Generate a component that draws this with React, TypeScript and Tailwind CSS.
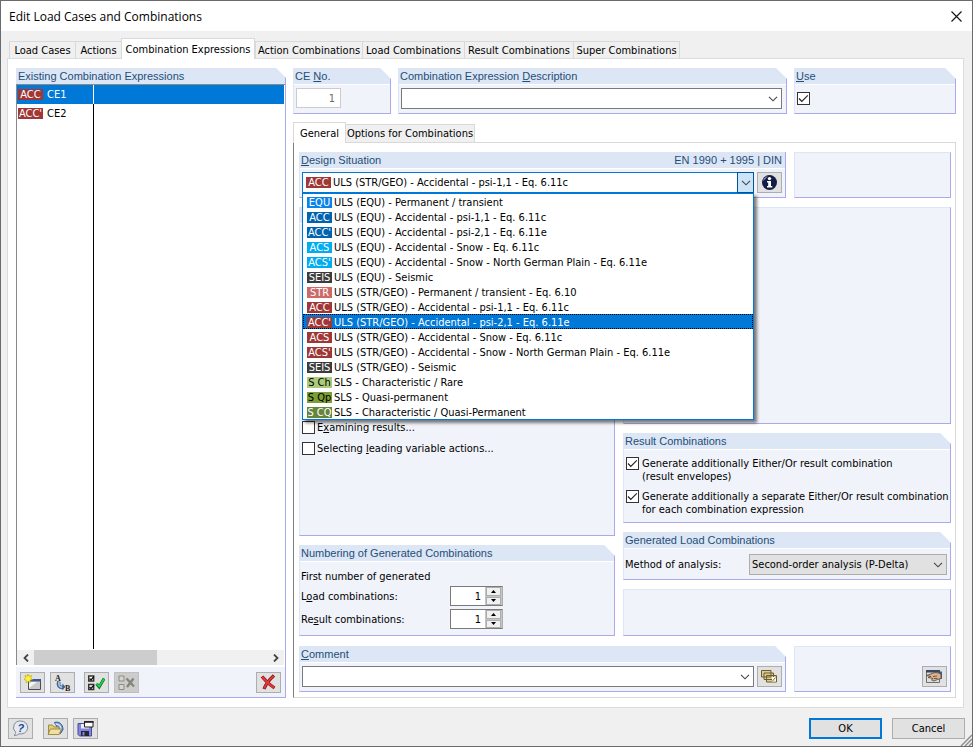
import { useState, type ReactNode } from "react";
import clsx from "clsx";

const TABS = [
  { name: "Load Cases", width: "w-[67px]" },
  { name: "Actions", width: "w-[47px]" },
  { name: "Combination Expressions", width: "w-[134px]" },
  { name: "Action Combinations", width: "w-[108px]" },
  { name: "Load Combinations", width: "w-[103px]" },
  { name: "Result Combinations", width: "w-[110px]" },
  { name: "Super Combinations", width: "w-[107px]" },
];

interface Situation {
  code: string;
  label: string;
  badge: string;
}

const RED = "bg-[#9e3735] text-white";

const SITUATIONS: Situation[] = [
  { code: "EQU", label: "ULS (EQU) - Permanent / transient", badge: "bg-[#0a84ea] text-white" },
  { code: "ACC", label: "ULS (EQU) - Accidental - psi-1,1 - Eq. 6.11c", badge: "bg-[#0063b1] text-white" },
  { code: "ACC'", label: "ULS (EQU) - Accidental - psi-2,1 - Eq. 6.11e", badge: "bg-[#0063b1] text-white" },
  { code: "ACS", label: "ULS (EQU) - Accidental - Snow - Eq. 6.11c", badge: "bg-[#00adf0] text-white" },
  { code: "ACS'", label: "ULS (EQU) - Accidental - Snow - North German Plain - Eq. 6.11e", badge: "bg-[#00adf0] text-white" },
  { code: "SEIS", label: "ULS (EQU) - Seismic", badge: "bg-[#3c3c3c] text-white" },
  { code: "STR", label: "ULS (STR/GEO) - Permanent / transient - Eq. 6.10", badge: "bg-[#cd6967] text-white" },
  { code: "ACC", label: "ULS (STR/GEO) - Accidental - psi-1,1 - Eq. 6.11c", badge: RED },
  { code: "ACC'", label: "ULS (STR/GEO) - Accidental - psi-2,1 - Eq. 6.11e", badge: RED },
  { code: "ACS", label: "ULS (STR/GEO) - Accidental - Snow - Eq. 6.11c", badge: RED },
  { code: "ACS'", label: "ULS (STR/GEO) - Accidental - Snow - North German Plain - Eq. 6.11e", badge: RED },
  { code: "SEIS", label: "ULS (STR/GEO) - Seismic", badge: "bg-[#3c3c3c] text-white" },
  { code: "S Ch", label: "SLS - Characteristic / Rare", badge: "bg-[#aacb7c] text-black" },
  { code: "S Qp", label: "SLS - Quasi-permanent", badge: "bg-[#7b9f35] text-black" },
  { code: "S CQ", label: "SLS - Characteristic / Quasi-Permanent", badge: "bg-[#64853a] text-white" },
];

const EXPRESSIONS = [
  { code: "ACC", name: "CE1" },
  { code: "ACC'", name: "CE2" },
];

function Badge({ code, className }: { code: string; className: string }) {
  return (
    <span className={clsx("inline-flex h-[11px] w-[25px] shrink-0 items-center justify-center whitespace-nowrap", className)}>
      {code}
    </span>
  );
}

// Framed group box. Titled boxes have their top right corner cut off, unless square.
function Group({ title, aside, square, className, bodyClass, children }: {
  title?: ReactNode;
  aside?: string;
  square?: boolean;
  className?: string;
  bodyClass?: string;
  children?: ReactNode;
}) {
  const titled = title !== undefined;
  return (
    <section
      className={clsx(
        "flex flex-col border-r border-b border-l border-r-[#a9a9ec] border-b-[#a9a9ec] border-l-[#dce6f4] bg-[#f0f3f9]",
        !titled && "border-t border-t-[#dce6f4]",
        titled && !square && "[clip-path:polygon(0_0,calc(100%-11px)_0,100%_11px,100%_100%,0_100%)]",
        className,
      )}
    >
      {titled && (
        <h2 className="flex h-[17px] shrink-0 items-center justify-between border-b border-white bg-[#dce6f4] pr-[3px] pl-px font-['Liberation_Sans',sans-serif] text-[11px] text-[#1f4e79]">
          <span>{title}</span>
          {aside && <span>{aside}</span>}
        </h2>
      )}
      <div className={clsx("flex grow", bodyClass)}>{children}</div>
    </section>
  );
}

function Chevron() {
  return (
    <svg viewBox="0 0 10 6" className="h-[6px] w-[10px]" fill="none" stroke="#444" strokeWidth="1.1" aria-hidden="true">
      <path d="M1 .8 5 4.800 9 .8" />
    </svg>
  );
}

function Combo({ id, label, value, grey, className }: { id: string; label: string; value?: string; grey?: boolean; className?: string }) {
  return (
    <span className={clsx("relative flex h-[21px]", className)}>
      <select
        id={id}
        aria-label={label}
        className={clsx("w-full appearance-none border pr-5 pl-[2px] outline-none", grey ? "border-[#adadad] bg-[#e1e1e1]" : "border-[#7a7a7a] bg-white")}
      >
        <option>{value}</option>
      </select>
      <span className="pointer-events-none absolute inset-y-0 right-1 flex items-center">
        <Chevron />
      </span>
    </span>
  );
}

function Tick({ id, label, checked }: { id: string; label?: string; checked?: boolean }) {
  return (
    <span className="relative block size-[13px] shrink-0">
      <input
        id={id}
        type="checkbox"
        aria-label={label}
        defaultChecked={checked}
        className="peer block size-[13px] appearance-none border border-[#333] bg-white"
      />
      <svg viewBox="0 0 13 13" className="pointer-events-none absolute inset-0 hidden peer-checked:block" fill="none" stroke="#222" strokeWidth="1.200" aria-hidden="true">
        <path d="M2 6.500 4.800 9.300l6-6" />
      </svg>
    </span>
  );
}

function IconButton({ label, disabled, children, className }: { label: string; disabled?: boolean; children: ReactNode; className?: string }) {
  return (
    <button
      type="button"
      aria-label={label}
      disabled={disabled}
      className={clsx(
        "flex h-[21px] w-[25px] shrink-0 items-center justify-center border",
        disabled ? "border-[#bfbfbf] bg-[#cccccc]" : "border-[#adadad] bg-[#e1e1e1]",
        className,
      )}
    >
      <svg viewBox="0 0 17 17" className="size-[17px]" fill="none" aria-hidden="true">{children}</svg>
    </button>
  );
}

function Spinner({ id, value }: { id: string; value: number }) {
  const [n, setN] = useState(value);
  const arrow = "flex flex-1 items-center justify-center border border-[#adadad] bg-[#f0f0f0]";
  return (
    <span className="flex h-5 w-[53px] border border-[#7a7a7a] border-r-[#adadad] bg-white">
      <input id={id} value={n} onChange={(e) => setN(Number(e.target.value) || 1)} className="w-[34px] pr-1 text-right outline-none" />
      <span className="flex flex-1 flex-col gap-px bg-[#c4c4c4] px-px">
        <button type="button" aria-label="Increase" onClick={() => setN(n + 1)} className={arrow}>
          <svg viewBox="0 0 5 3" className="h-[3px] w-[5px]"><path d="M0 3 2.500 0 5 3z" /></svg>
        </button>
        <button type="button" aria-label="Decrease" onClick={() => setN(n - 1)} className={arrow}>
          <svg viewBox="0 0 5 3" className="h-[3px] w-[5px]"><path d="M0 0 2.500 3 5 0z" /></svg>
        </button>
      </span>
    </span>
  );
}

function ExpressionList() {
  const [selected, setSelected] = useState("CE1");
  return (
    <section className="flex w-[270px] shrink-0 flex-col border-r border-b border-[#a9a9ec] bg-[#f0f3f9] [clip-path:polygon(0_0,calc(100%-10px)_0,100%_10px,100%_100%,0_100%)]">
      <h2 className="flex h-4 items-center bg-[#dce6f4] pl-[2px] font-['Liberation_Sans',sans-serif] text-[11px] text-[#1f4e79]">
        Existing Combination Expressions
      </h2>
      <div className="flex grow flex-col border-t border-l border-[#8a8a8a] bg-white pr-px">
        <table className="w-full table-fixed border-separate border-spacing-0">
          <tbody>
            {EXPRESSIONS.map((e) => (
              <tr key={e.name} onClick={() => setSelected(e.name)} className={clsx("h-[19px]", selected === e.name && "bg-[#0078d7] text-white")}>
                <td className={clsx("w-[77px] border-r p-0", selected === e.name ? "border-white" : "border-black")}>
                  <span className="flex items-center gap-1 pl-px">
                    <Badge code={e.code} className={RED} />
                    {e.name}
                  </span>
                </td>
                <td className="p-0" />
              </tr>
            ))}
          </tbody>
        </table>
        <div className="w-[77px] grow border-r border-black" />
        <div className="mt-px flex h-[15px] bg-[#f0f0f0]">
          <button type="button" aria-label="Scroll left" className="flex w-[17px] items-center justify-center">
            <svg viewBox="0 0 6 8" className="h-2 w-[6px]" fill="none" stroke="#444" strokeWidth="1.800"><path d="M5 .5 1.500 4 5 7.500" /></svg>
          </button>
          <div className="flex grow">
            <div className="w-[53%] bg-[#cdcdcd]" />
          </div>
          <button type="button" aria-label="Scroll right" className="flex w-[17px] items-center justify-center">
            <svg viewBox="0 0 6 8" className="h-2 w-[6px]" fill="none" stroke="#444" strokeWidth="1.800"><path d="M1 .5 4.500 4 1 7.500" /></svg>
          </button>
        </div>
      </div>
      <div className="flex gap-[5px] border-t-2 border-white px-1 pt-[5px] pb-1">
        <IconButton label="New combination expression">
          <path d="M4.500 5.500h12v10h-12z" fill="#c9c9c9" stroke="#4c4c50" />
          <path d="M5 8h8l-8 6z" fill="#f4f4f4" />
          <path d="M4 5h13v2.500H4z" fill="#3a5a96" />
          <path d="m4 0 1 2.300L7.800 1.500 6.700 4l2 1.500-2.600.5.200 2.600-2.200-1.300L2 8.800l.2-2.700L-.2 5.400l2-1.500-.9-2.500 2.400.9z" fill="#fff23a" stroke="#b6a40c" strokeWidth=".6" />
        </IconButton>
        <IconButton label="Renumber">
          <path d="M5 7.500c-1.500 4 .5 6.500 4.500 6" stroke="#3f618f" strokeWidth="3.600" />
          <path d="M5 8c-1 3.300.8 5.500 4 5.200" stroke="#a3c2e6" strokeWidth="1.800" />
          <path d="m8.500 9.500 3 3.500-3.500 3z" fill="#3f618f" />
          <text x="1" y="6.500" fontSize="8" fontWeight="bold" fontFamily="Liberation Serif, serif" fill="#222">A</text>
          <text x="11" y="16.500" fontSize="8" fontWeight="bold" fontFamily="Liberation Serif, serif" fill="#222">B</text>
        </IconButton>
        <IconButton label="Select all" className="ml-1">
          <path d="M.7 2h5v5h-5zM.7 10.500h5v5h-5z" fill="#fff" stroke="#333" strokeWidth="1.400" />
          <path d="m1.500 4.500 1.500 1.500 3-3.500M1.500 13 3 14.500l3-3.500" stroke="#111" strokeWidth="1.300" />
          <path d="m8.500 9.800 2.700 3.200 5-8.500" stroke="#087524" strokeWidth="3" />
          <path d="m8.800 9.800 2.400 2.800L16 5" stroke="#22d64e" strokeWidth="1.500" />
        </IconButton>
        <IconButton label="Deselect all" disabled>
          <path d="M1 2h5v5H1zM1 10.500h5v5H1z" fill="#d6d6d0" stroke="#8c8c84" />
          <path d="m8.500 4.500 7.500 8M15.500 4.500l-6.500 8.500" stroke="#85857c" strokeWidth="2.400" />
        </IconButton>
        <IconButton label="Delete" className="ml-auto">
          <path d="M2 2.500c3 4 7 8 12.500 11.500M14 1.500C9.500 5.500 6 9.500 4 15" stroke="#7c1818" strokeWidth="3.200" />
          <path d="M2.300 2.800c3 3.800 6.800 7.800 11.800 11M13.700 1.900C9.500 5.500 6 9.500 4.200 14.500" stroke="#e8383c" strokeWidth="1.900" />
        </IconButton>
      </div>
    </section>
  );
}

function DesignSituation() {
  const [current, setCurrent] = useState(7);
  const active = 8;
  return (
    <Group title={<><u>D</u>esign Situation</>} aside="EN 1990 + 1995 | DIN" square className="grow" bodyClass="gap-[3px] pt-[3px] pr-[3px] pb-1 pl-[2px]">
      <div className="relative grow">
        <select
          aria-label="Design Situation"
          value={current}
          onChange={(e) => setCurrent(Number(e.target.value))}
          className="block h-[21px] w-full appearance-none border border-[#0078d7] bg-white pl-[30px] outline-none"
        >
          {SITUATIONS.map((s, i) => (
            <option key={i} value={i}>{s.label}</option>
          ))}
        </select>
        <span className="pointer-events-none absolute inset-y-0 left-1 flex items-center">
          <Badge code={SITUATIONS[current].code} className={SITUATIONS[current].badge} />
        </span>
        <span className="pointer-events-none absolute inset-y-0 right-0 flex w-[17px] items-center justify-center border border-[#005499] bg-[#cce4f7]">
          <Chevron />
        </span>
        <ul role="listbox" aria-label="Design situations" className="absolute top-full left-0 z-10 w-full border border-[#0078d7] bg-white shadow-[3px_3px_3px_rgba(0,0,0,0.5)]">
          {SITUATIONS.map((s, i) => (
            <li
              key={i}
              role="option"
              aria-selected={i === active}
              onClick={() => setCurrent(i)}
              className={clsx("flex h-[15px] items-center gap-[2px] pt-px pl-1 whitespace-nowrap", i === active && "bg-[#0078d7] text-white outline-1 -outline-offset-1 outline-dotted outline-black")}
            >
              <Badge code={s.code} className={s.badge} />
              {s.label}
            </li>
          ))}
        </ul>
      </div>
      <IconButton label="Information">
        <circle cx="8.500" cy="8.500" r="7.500" fill="#141d45" />
        <path d="M2 7a7 7 0 0 1 5-5C5 4 3.500 6 2 7z" fill="#8e9bc4" />
        <circle cx="8.500" cy="4.600" r="1.700" fill="#fff" />
        <path d="M6 7h4v5h1.300v1.500H6V12h1.200V8.500H6z" fill="#fff" />
      </IconButton>
    </Group>
  );
}

function GeneralPage() {
  return (
    <div className="flex grow flex-col border border-[#d9d9d9] border-l-[#7f7f7f] bg-white pt-[9px] pr-1 pb-[5px] pl-[5px]">
      <div className="flex gap-2">
        <DesignSituation />
        <Group className="w-[157px] shrink-0" />
      </div>

      <div className="mt-[9px] grid grow grid-cols-[316fr_328fr] gap-2">
        <div className="flex flex-col gap-[9px]">
          <Group title="" className="grow" bodyClass="flex-col justify-end gap-2 px-[2px] pb-20">
            <label htmlFor="examining" className="flex items-center gap-[2px]">
              <Tick id="examining" />
              <span>E<u>x</u>amining results...</span>
            </label>
            <label htmlFor="leading" className="flex items-center gap-[2px]">
              <Tick id="leading" />
              <span>Selecting <u>l</u>eading variable actions...</span>
            </label>
          </Group>

          <Group title="Numbering of Generated Combinations" bodyClass="flex-col gap-[3px] px-px pt-2 pb-[6px]">
            <p>First number of generated</p>
            <div className="flex items-center">
              <label htmlFor="load-no" className="w-[149px]">L<u>o</u>ad combinations:</label>
              <Spinner id="load-no" value={1} />
            </div>
            <div className="flex items-center">
              <label htmlFor="result-no" className="w-[149px]">Re<u>s</u>ult combinations:</label>
              <Spinner id="result-no" value={1} />
            </div>
          </Group>
        </div>

        <div className="flex flex-col gap-[9px]">
          <Group className="grow" />
          <Group title="Result Combinations" bodyClass="flex-col gap-[7px] pt-[7px] pb-[6px] pl-[2px]">
            <label htmlFor="envelope" className="flex gap-[3px] whitespace-nowrap">
              <Tick id="envelope" checked />
              <span>Generate additionally Either/Or result combination<br />(result envelopes)</span>
            </label>
            <label htmlFor="separate" className="flex gap-[3px] whitespace-nowrap">
              <Tick id="separate" checked />
              <span>Generate additionally a separate Either/Or result combination<br />for each combination expression</span>
            </label>
          </Group>
          <Group title="Generated Load Combinations" bodyClass="items-center justify-between pt-[5px] pr-[3px] pb-1 pl-px">
            <label htmlFor="method">Method of analysis:</label>
            <Combo id="method" label="Method of analysis" value="Second-order analysis (P-Delta)" grey className="w-[198px]" />
          </Group>
          <Group className="h-[47px]" />
        </div>
      </div>

      <div className="mt-[10px] flex gap-2">
        <Group title={<><u>C</u>omment</>} className="grow" bodyClass="gap-[3px] pt-[3px] pr-[3px] pb-1 pl-[2px]">
          <Combo id="comment" label="Comment" className="grow" />
          <IconButton label="Comment library">
            <path d="M.5 2.500h9.500v6.500H.5zM3 5h9.500v6.500H3zM5.500 7.500h10v6.500h-10z" fill="#dccb95" stroke="#6e5d2c" />
            <path d="M11 9h4v4.500h-4z" fill="#fffbe6" />
            <path d="m11.500 13 3-3.500" stroke="#6e5d2c" strokeWidth=".9" />
          </IconButton>
        </Group>
        <Group className="w-[157px] shrink-0" bodyClass="items-end justify-end pr-[3px] pb-1">
          <IconButton label="Settings">
            <path d="M.5 2.500h13v12H.5z" fill="#dedede" stroke="#6f6f6f" />
            <path d="M0 2h14v2.500H0z" fill="#38465f" />
            <path d="M12 3.500h4v7.500l-4-1z" fill="#3d5a95" />
            <path d="M.5 7.500 6 5.500l3-1 4 .5 2 1.500v4l-3.500 1L8 13l-2.500-1L7 10.500 4.500 10 2 9.500l3-1z" fill="#d9b291" stroke="#5b4332" strokeWidth=".8" />
            <path d="M7 8.500l4-.5M8 10.500h3.500" stroke="#5b4332" strokeWidth=".8" />
          </IconButton>
        </Group>
      </div>
    </div>
  );
}

export default function App() {
  const [tab, setTab] = useState("Combination Expressions");

  return (
    <main className="relative flex min-h-screen flex-col border border-[#6b6b6b] bg-[#f0f0f0] font-['DejaVu_Sans_Condensed','Noto_Sans',sans-serif] text-[11px] leading-[13px] text-black">
      <header className="flex h-[30px] items-center justify-between bg-white pr-[10px] pl-2">
        <h1 className="font-['Open_Sans',sans-serif] text-[12px]">Edit Load Cases and Combinations</h1>
        <button type="button" aria-label="Close">
          <svg viewBox="0 0 11 11" className="size-[11px]" stroke="#111" strokeWidth="1.100"><path d="m.5.5 10 10M10.500.5l-10 10" /></svg>
        </button>
      </header>

      <div className="flex grow flex-col pt-[7px] pr-2 pl-[6px]">
        <div role="tablist" className="flex items-end pl-[2px]">
          {TABS.map((t) => (
            <button
              key={t.name}
              type="button"
              role="tab"
              aria-selected={t.name === tab}
              onClick={() => setTab(t.name)}
              className={clsx(
                "shrink-0 border border-b-0 border-[#d9d9d9] whitespace-nowrap",
                t.width,
                t.name === tab ? "relative -mb-px h-[21px] bg-white" : "-mr-px h-[17px] bg-[#f0f0f0]",
              )}
            >
              {t.name}
            </button>
          ))}
        </div>

        <div className="flex grow gap-[7px] border border-[#dcdcdc] bg-white pt-[9px] pr-[7px] pb-[9px] pl-2">
          <ExpressionList />

          <div className="flex min-w-0 grow flex-col">
            <div className="flex gap-[7px]">
              <Group title={<>CE <u>N</u>o.</>} className="w-[98px] shrink-0" bodyClass="pt-[3px] pb-[5px] pl-[2px]">
                <input aria-label="CE No." defaultValue="1" readOnly className="h-5 w-[45px] border border-[#cccccc] bg-white pr-[5px] text-right text-[#6d6d6d] outline-none" />
              </Group>
              <Group title={<>Combination Expression <u>D</u>escription</>} className="grow" bodyClass="pt-[3px] pr-1 pb-1 pl-[2px]">
                <Combo id="description" label="Combination Expression Description" className="grow" />
              </Group>
              <Group title={<><u>U</u>se</>} className="w-[162px] shrink-0" bodyClass="pt-[7px] pl-[2px]">
                <Tick id="use" label="Use" checked />
              </Group>
            </div>

            <div role="tablist" className="mt-2 flex items-end">
              <button type="button" role="tab" aria-selected className="relative -mb-px h-[21px] w-[53px] border border-b-0 border-[#d9d9d9] bg-white">General</button>
              <button type="button" role="tab" aria-selected={false} className="h-[18px] w-[129px] border border-b-0 border-l-0 border-[#d9d9d9] bg-[#f0f0f0] whitespace-nowrap">Options for Combinations</button>
            </div>
            <GeneralPage />
          </div>
        </div>
      </div>

      <footer className="flex items-center justify-between pt-[10px] pr-[7px] pb-[7px] pl-[7px]">
        <div className="flex gap-[5px]">
          <IconButton label="Help">
            <path d="M8.500 1a7 6.500 0 1 1-1.500 12.800c-1.500 1.400-3.500 2-5 1.700 1-.8 1.700-2 1.700-3.200A6.800 6.500 0 0 1 8.500 1z" fill="#e5e9f0" stroke="#848a94" />
            <text x="5.500" y="11.500" fontSize="11" fontWeight="bold" fontStyle="italic" fontFamily="Liberation Sans, sans-serif" fill="#24479b">?</text>
          </IconButton>
          <IconButton label="Open" className="ml-[5px]">
            <path d="M7.500 2.500c4-1.500 8.500 1.500 8.500 7l-2.500 4z" fill="#6f9bd6" stroke="#38598f" />
            <path d="M8.500 4c3 0 5.500 2 5.500 6" stroke="#d6e6fa" strokeWidth="1.300" />
            <path d="M1.500 5h4l1.500 2h5v7.500l-10.500-1z" fill="#dfcc7d" stroke="#9a843a" strokeWidth=".9" />
            <path d="m1 14.500 2.500-5.500h11L12 14.500z" fill="#efe0a0" stroke="#9a843a" strokeWidth=".9" />
          </IconButton>
          <IconButton label="Save">
            <path d="M1 3.500h13.500v12.500h-12L1 14.500z" fill="#8386df" stroke="#4a4d94" />
            <path d="M4 4h8v4.500H4z" fill="#eceefb" />
            <path d="M4 11h8v5H4z" fill="#26262e" />
            <path d="M5.500 12h2v3.500h-2z" fill="#8386df" />
            <path d="M7.500 1.500h8.500v5.500H7.500z" fill="#fff" stroke="#222" />
            <path d="M7 1h9.500v1.800H7z" fill="#222" />
          </IconButton>
        </div>
        <div className="flex gap-[10px]">
          <button type="button" className="h-[21px] w-[73px] border-2 border-[#0078d7] bg-[#e1e1e1]">OK</button>
          <button type="button" className="h-[21px] w-[73px] border border-[#adadad] bg-[#e1e1e1]">Cancel</button>
        </div>
      </footer>
      <svg viewBox="0 0 12 12" className="absolute right-0 bottom-0 size-3" aria-hidden="true">
        <path d="M1 12 12 1M5 12l7-7M9 12l3-3" stroke="#8f8f8f" strokeWidth="1.500" />
      </svg>
    </main>
  );
}
